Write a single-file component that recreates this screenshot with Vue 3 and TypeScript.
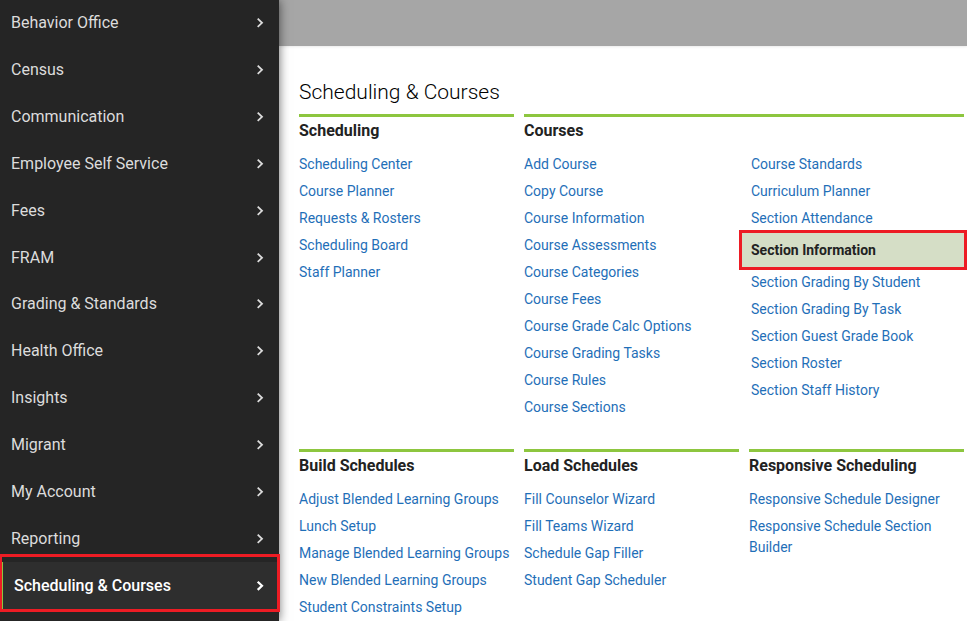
<script setup lang="ts">
import { ref } from 'vue'

interface Section {
  title: string
  wide?: boolean
  columns: string[][]
}

const menu: string[] = [
  'Behavior Office',
  'Census',
  'Communication',
  'Employee Self Service',
  'Fees',
  'FRAM',
  'Grading & Standards',
  'Health Office',
  'Insights',
  'Migrant',
  'My Account',
  'Reporting',
  'Scheduling & Courses',
]

const activeMenu = ref('Scheduling & Courses')
const activeLink = ref('Section Information')

const sections: Section[] = [
  {
    title: 'Scheduling',
    columns: [
      ['Scheduling Center', 'Course Planner', 'Requests & Rosters', 'Scheduling Board', 'Staff Planner'],
    ],
  },
  {
    title: 'Courses',
    wide: true,
    columns: [
      [
        'Add Course',
        'Copy Course',
        'Course Information',
        'Course Assessments',
        'Course Categories',
        'Course Fees',
        'Course Grade Calc Options',
        'Course Grading Tasks',
        'Course Rules',
        'Course Sections',
      ],
      [
        'Course Standards',
        'Curriculum Planner',
        'Section Attendance',
        'Section Information',
        'Section Grading By Student',
        'Section Grading By Task',
        'Section Guest Grade Book',
        'Section Roster',
        'Section Staff History',
      ],
    ],
  },
  {
    title: 'Build Schedules',
    columns: [
      [
        'Adjust Blended Learning Groups',
        'Lunch Setup',
        'Manage Blended Learning Groups',
        'New Blended Learning Groups',
        'Student Constraints Setup',
      ],
    ],
  },
  {
    title: 'Load Schedules',
    columns: [['Fill Counselor Wizard', 'Fill Teams Wizard', 'Schedule Gap Filler', 'Student Gap Scheduler']],
  },
  {
    title: 'Responsive Scheduling',
    columns: [['Responsive Schedule Designer', 'Responsive Schedule Section Builder']],
  },
]
</script>

<template>
  <div class="app">
    <nav class="sidebar">
      <button
        v-for="item in menu"
        :key="item"
        type="button"
        class="menu-item"
        :class="{ active: item === activeMenu }"
        @click="activeMenu = item"
      >
        <span>{{ item }}</span>
        <svg class="chevron" viewBox="0 0 10 12" aria-hidden="true">
          <path d="M2.7 1.7 7 5.8 2.7 9.9" />
        </svg>
      </button>
    </nav>
    <div class="content">
      <header class="topbar"></header>
      <main class="panel">
        <h1>Scheduling &amp; Courses</h1>
        <div class="sections">
          <section v-for="section in sections" :key="section.title" :class="{ wide: section.wide }">
            <h2>{{ section.title }}</h2>
            <div class="columns">
              <ul v-for="(column, index) in section.columns" :key="index">
                <li v-for="link in column" :key="link" :class="{ selected: link === activeLink }">
                  <a href="#" @click.prevent="activeLink = link">{{ link }}</a>
                </li>
              </ul>
            </div>
          </section>
        </div>
      </main>
    </div>
  </div>
</template>

<style>
body {
  margin: 0;
  background: #fff;
}
</style>

<style scoped>
.app {
  display: flex;
  min-height: 100vh;
  font-family: Roboto, 'Liberation Sans', sans-serif;
  color: #222;
}

.sidebar {
  position: relative;
  z-index: 1;
  display: flex;
  flex: 0 0 279px;
  flex-direction: column;
  box-sizing: border-box;
  padding-bottom: 12px;
  background: #252525;
  box-shadow: 0 0 10px rgba(0, 0, 0, 0.6);
}

.menu-item {
  position: relative;
  display: flex;
  flex: 1 0 40px;
  align-items: center;
  justify-content: space-between;
  max-height: 56px;
  padding: 0 14px 0 11px;
  border: 0;
  background: none;
  color: #dcdcdc;
  font: 16px/20px Roboto, 'Liberation Sans', sans-serif;
  text-align: left;
  cursor: pointer;
}

.menu-item.active {
  border-left: 3px solid #8dc63f;
  background: #2e2e2e;
  color: #fff;
  font-weight: 500;
}

.menu-item.active::after {
  position: absolute;
  inset: -8px -1px -3px -3px;
  border: 3px solid #ed1c24;
  border-left-width: 2px;
  content: '';
  pointer-events: none;
}

.chevron {
  width: 10px;
  height: 12px;
  fill: none;
  stroke: currentColor;
  stroke-width: 1.8;
}

.active .chevron {
  stroke-width: 2.2;
}

.content {
  flex: 1;
  min-width: 0;
}

.topbar {
  height: 46px;
  background: #a6a6a6;
  box-shadow: 0 0 3px rgba(0, 0, 0, 0.15);
}

.panel {
  padding: 32px 3px 0 20px;
}

h1 {
  margin: 0 0 8px;
  color: #000;
  font-size: 21px;
  font-weight: 300;
  line-height: 28px;
}

.sections {
  display: grid;
  grid-template-columns: repeat(3, minmax(0, 1fr));
  gap: 31px 10px;
}

.wide {
  grid-column: span 2;
}

section {
  border-top: 3px solid #8dc63f;
}

h2 {
  margin: 4px 0 13px;
  font-size: 16px;
  font-weight: 700;
  line-height: 20px;
}

.columns {
  display: flex;
}

ul {
  flex: 1;
  min-width: 0;
  margin: 0;
  padding: 0;
  list-style: none;
}

ul + ul {
  padding-left: 14px;
}

li {
  margin-bottom: 6px;
  font-size: 14px;
  line-height: 21px;
}

li:last-child {
  margin-bottom: 0;
}

a {
  color: #1f6fb8;
  text-decoration: none;
}

.selected {
  margin: -5px -3px 2px -12px;
  padding: 7px 9px 6px;
  border: 3px solid #ed1c24;
  background: #d5dec6;
}

.selected a {
  color: #222;
  font-weight: 700;
}
</style>
